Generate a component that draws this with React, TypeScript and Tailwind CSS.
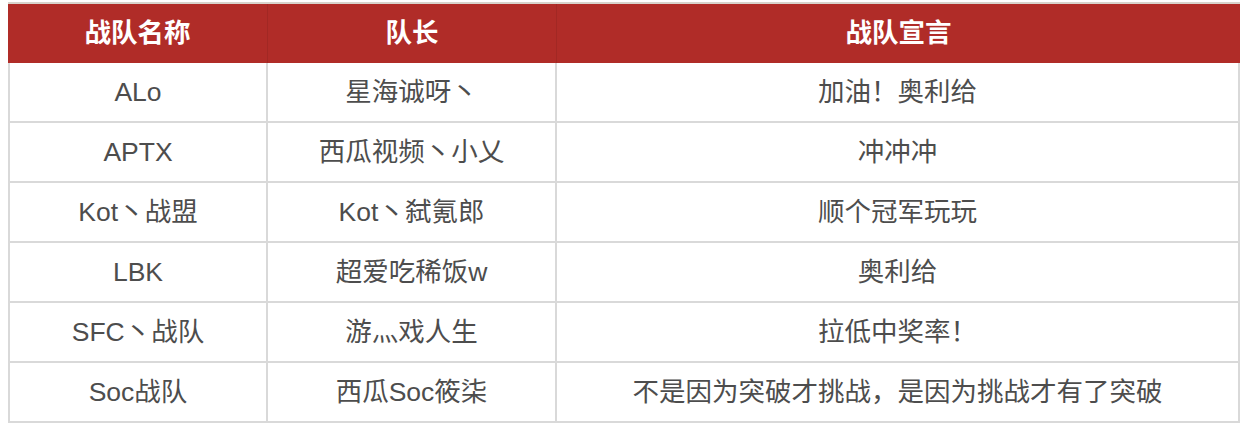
const rows = [
  ["ALo", "星海诚呀丶", "加油！奥利给"],
  ["APTX", "西瓜视频丶小乂", "冲冲冲"],
  ["Kot丶战盟", "Kot丶弑氪郎", "顺个冠军玩玩"],
  ["LBK", "超爱吃稀饭w", "奥利给"],
  ["SFC丶战队", "游灬戏人生", "拉低中奖率！"],
  ["Soc战队", "西瓜Soc筱柒", "不是因为突破才挑战，是因为挑战才有了突破"],
]

const font = { fontFamily: '"Liberation Sans", "Noto Sans CJK SC", sans-serif' }

export default function App() {
  return (
    <div className="w-[1248px] h-[430px] bg-white pt-[2px] pl-2" style={font}>
      <div className="w-[1232px] border-t-2 border-[#d8d3cc]">
        <div className="grid grid-cols-[260px_289px_683px] h-[59px] bg-[#b02c28] text-white text-[26.5px] font-bold">
          <div className="flex items-center justify-center border-r border-[#a22824]">战队名称</div>
          <div className="flex items-center justify-center border-r border-[#a22824]">队长</div>
          <div className="flex items-center justify-center">战队宣言</div>
        </div>
        {rows.map((r, i) => (
          <div key={i} className="grid grid-cols-[260px_289px_683px] h-[60px] text-[26.5px] text-[#4d4d4d]">
            <div className="flex items-center justify-center pt-[2px] border-l-2 border-r-2 border-b-2 border-[#d9d9d9]">{r[0]}</div>
            <div className="flex items-center justify-center pt-[2px] border-r-2 border-b-2 border-[#d9d9d9]">{r[1]}</div>
            <div className="flex items-center justify-center pt-[2px] border-r-2 border-b-2 border-[#d9d9d9]">{r[2]}</div>
          </div>
        ))}
      </div>
    </div>
  )
}
